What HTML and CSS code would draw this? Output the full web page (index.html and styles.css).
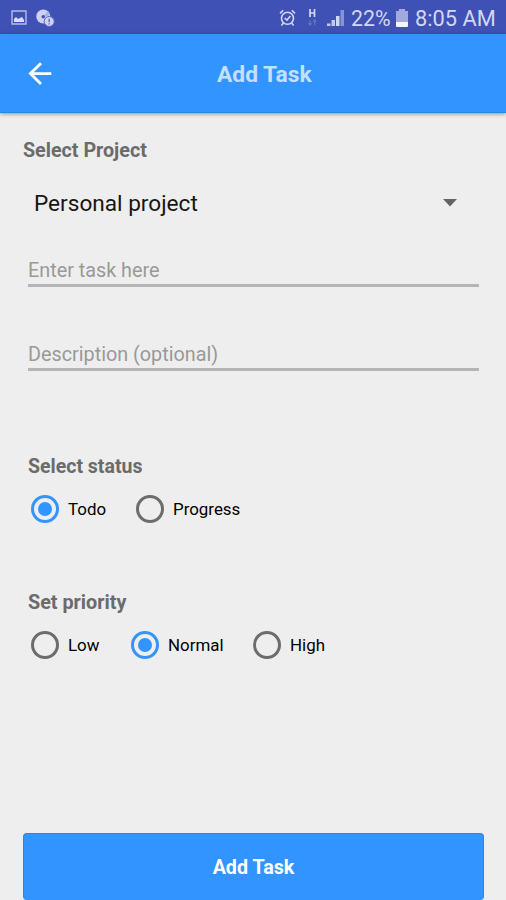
FILE: index.html
```html
<!DOCTYPE html>
<html lang="en">
<head>
<meta charset="utf-8">
<title>Add Task</title>
<link rel="stylesheet" href="styles.css">
</head>
<body>
<div class="screen">
  <div class="status-bar">
    <svg class="i-photo" width="16" height="15" viewBox="0 0 16 15"><path d="M1 1h14v13H1z" fill="none" stroke="#b5bce6" stroke-width="1.4"/><path d="M3 12V9l2-2 2 2 2-1 2-1 2 3v2z" fill="#d9def5"/></svg>
    <svg class="i-disc" width="19" height="18" viewBox="0 0 19 18"><circle cx="7.3" cy="7.5" r="7" fill="#ccd2f0"/><path d="M7 8l5-6 2 4z" fill="#a9b0e0"/><circle cx="7.3" cy="7.8" r="1.8" fill="#4450b4"/><circle cx="13.2" cy="12.5" r="5" fill="#ccd2f0" stroke="#5964be" stroke-width="1"/><path d="M13.2 9.8v3.5M13.2 14.3v1.3" stroke="#6570c4" stroke-width="1.5"/></svg>
    <span class="spacer"></span>
    <svg class="i-alarm" width="17" height="18" viewBox="0 0 17 18"><g fill="none" stroke="#d3d8f2" stroke-width="1.6"><circle cx="8.5" cy="9.2" r="6"/><path d="M1 4.4 4.2 1.2M12.8 1.2 16 4.4M4.4 14l-2 2.6M12.6 14l2 2.6M5.7 9l2.2 2 3.5-4"/></g></svg>
    <svg class="i-data" width="9" height="17" viewBox="0 0 9 17"><path d="M2 0v8M6.5 0v8M2 4h4.5" stroke="#d3d8f2" stroke-width="1.7" fill="none"/><path d="M2 11v5M6.7 11v5M.5 14.3 2 16l1.5-1.7M5.2 12.7l1.5-1.7 1.5 1.7" stroke="#6a74c5" stroke-width="1.2" fill="none"/></svg>
    <svg class="i-signal" width="18" height="17" viewBox="0 0 18 17"><path d="M0 14.5h3.5V17H0zM4.5 11h3.5v6H4.5z" fill="#c3c9ed"/><path d="M9 7h3.5v10H9z" fill="#d3d8f2"/><path d="M13.5 1H17v16h-3.5z" fill="#8992d3"/></svg>
    <span class="percent">22%</span>
    <svg class="i-battery" width="12" height="18" viewBox="0 0 12 18"><path d="M3 0h6v2h3v12H0V2h3z" fill="#a2a9dd"/><path d="M0 13h12v4q0 1-1 1H1q-1 0-1-1z" fill="#f3f5fc"/></svg>
    <span class="clock">8:05 AM</span>
  </div>
  <header class="toolbar">
    <svg class="back" width="24" height="24" viewBox="0 0 24 24"><path d="M13 2.2 2.4 12.6 13 23M3 12.6h20.3" fill="none" stroke="#fff" stroke-width="2.8"/></svg>
    <h1 class="title">Add Task</h1>
  </header>
  <main class="form">
    <h2 class="label project-label">Select Project</h2>
    <div class="select"><span>Personal project</span><svg width="14" height="8" viewBox="0 0 14 8"><path d="M0 0h14L7 7.5z" fill="#646464"/></svg></div>
    <div class="field">Enter task here</div>
    <div class="field field-description">Description (optional)</div>
    <section class="group">
      <h2 class="label">Select status</h2>
      <div class="options">
        <div class="option opt-todo"><i class="radio on"></i><span>Todo</span></div>
        <div class="option"><i class="radio"></i><span>Progress</span></div>
      </div>
    </section>
    <section class="group group-priority">
      <h2 class="label label-priority">Set priority</h2>
      <div class="options">
        <div class="option opt-low"><i class="radio"></i><span>Low</span></div>
        <div class="option opt-normal"><i class="radio on"></i><span>Normal</span></div>
        <div class="option"><i class="radio"></i><span>High</span></div>
      </div>
    </section>
    <div class="submit"><span>Add Task</span></div>
  </main>
</div>
</body>
</html>
```

FILE: styles.css
```css
* { box-sizing: border-box; }
body { margin: 0; background: #eee; font-family: Roboto, "Liberation Sans", sans-serif; }
h1, h2 { margin: 0; }
svg { display: block; flex: none; }
span { white-space: nowrap; }
.screen { width: 506px; height: 900px; overflow: hidden; display: flex; flex-direction: column; background: #eee; }
.status-bar { height: 34px; flex: none; background: #3f51b5; display: flex; align-items: center; padding: 1px 10px 0 11px; color: #d3d8f2; }
.i-disc { margin-left: 9px; }
.spacer { flex: 1; }
.i-data { margin-left: 12px; }
.i-signal { margin-left: 10px; }
.percent { width: 40px; margin-left: 6px; font-size: 21.3px; line-height: 33px; padding-top: 2px; }
.i-battery { margin-left: 5px; }
.clock { width: 81px; margin-left: 7px; font-size: 21.8px; line-height: 33px; padding-top: 2px; }
.toolbar { height: 79px; flex: none; background: #3294ff; border-bottom: 1px solid #2388ec; box-shadow: 0 1px 4px rgba(0,0,0,.4); display: flex; align-items: center; padding-left: 28px; position: relative; }
.title { width: 96px; margin-left: 165px; padding-top: 4px; font-size: 22.8px; line-height: 30px; font-weight: 700; color: #c4e0ff; white-space: nowrap; }
.form { flex: 1; padding: 0 22px 0 23px; display: flex; flex-direction: column; }
.label { height: 24px; padding-top: 1px; font-size: 19.7px; line-height: 24px; font-weight: 700; color: #6b6b6b; }
.project-label { margin-top: 25px; }
.select { height: 36px; margin-top: 23px; padding: 0 27px 0 11px; display: flex; align-items: center; justify-content: space-between; font-size: 22.6px; color: #161616; }
.field { height: 50px; margin: 16px 5px 0; padding-top: 22px; border-bottom: 3px solid #b5b5b5; font-size: 19.8px; line-height: 24px; color: #999; }
.field-description { margin-top: 34px; }
.group { margin: 83px 0 0 5px; }
.group .label { font-size: 19.5px; }
.group .label-priority { font-size: 19.8px; }
.group-priority { margin-top: 66px; }
.options { display: flex; margin: 16px 0 0 3px; }
.option { display: flex; align-items: center; height: 30px; font-size: 16.9px; color: #000; }
.radio { width: 28px; height: 28px; border: 3px solid #6c6c6c; border-radius: 50%; display: grid; place-items: center; margin-right: 9px; flex: none; }
.radio.on { border-color: #3294ff; }
.radio.on::after { content: ""; width: 14px; height: 14px; border-radius: 50%; background: #3294ff; }
.opt-todo { width: 105px; }
.opt-low { width: 100px; }
.opt-normal { width: 122px; }
.submit { height: 67px; margin-top: auto; background: #3294ff; border: 1px solid #2088f2; border-bottom: 0; border-radius: 4px; display: flex; align-items: center; justify-content: center; color: #fff; font-size: 19.7px; font-weight: 700; }
```
